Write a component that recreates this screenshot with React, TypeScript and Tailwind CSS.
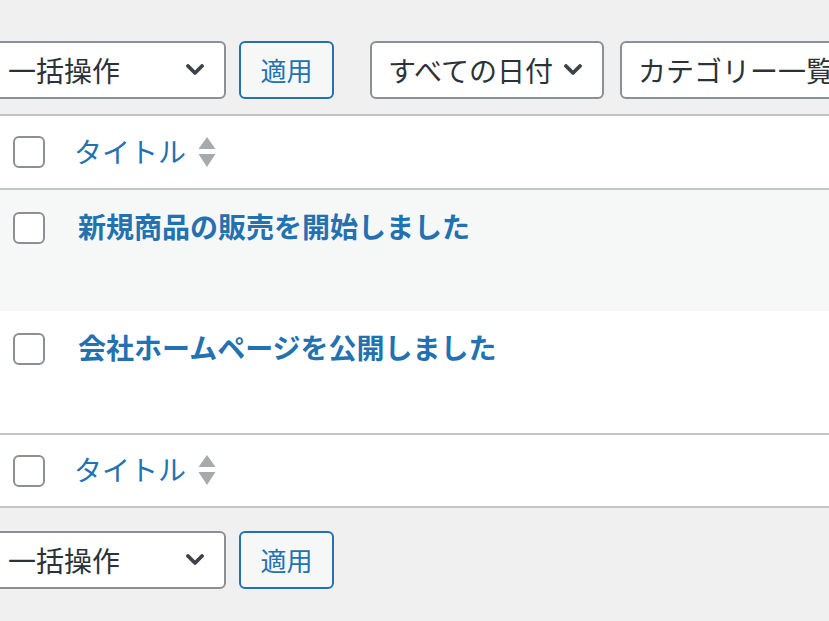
import React from "react";

const font = "font-['Noto_Sans_CJK_JP','Noto_Sans',sans-serif]";

const Chevron: React.FC = () => (
  <svg width="18" height="12" viewBox="0 0 18 12" className="shrink-0">
    <polyline
      points="2,2 9,9 16,2"
      fill="none"
      stroke="#3c434a"
      strokeWidth="3.8"
      strokeLinecap="round"
      strokeLinejoin="round"
    />
  </svg>
);

const SortArrows: React.FC = () => (
  <svg width="18" height="31" viewBox="0 0 18 31" className="shrink-0">
    <polygon points="9,0 17.5,12 0.5,12" fill="#a7aaad" />
    <polygon points="0.5,17 17.5,17 9,30" fill="#a7aaad" />
  </svg>
);

const Checkbox: React.FC = () => (
  <div className="w-[32px] h-[32px] shrink-0 rounded-[6px] border-2 border-[#8c8f94] bg-white" />
);

interface SelectBoxProps {
  label: string;
  className: string;
  chevron?: boolean;
}

const SelectBox: React.FC<SelectBoxProps> = ({ label, className, chevron = true }) => (
  <div
    className={`h-[58px] shrink-0 flex items-center justify-between pl-[16px] pr-[20px] rounded-[6px] border-2 border-[#8c8f94] bg-white text-[28px] text-[#2c3338] whitespace-nowrap overflow-hidden ${className}`}
  >
    <span className="leading-[32px]">{label}</span>
    {chevron && <Chevron />}
  </div>
);

const ApplyButton: React.FC = () => (
  <div className="h-[58px] w-[95px] shrink-0 flex items-center justify-center rounded-[6px] border-2 border-[#2271b1] bg-[#f6f7f7] text-[26px] text-[#2271b1]">
    <span className="leading-[32px]">適用</span>
  </div>
);

// header / footer of the list table
const HeaderRow: React.FC<{ className: string }> = ({ className }) => (
  <div className={`box-content flex items-center bg-white ${className}`}>
    <div className="pl-[13px] pr-[29px]">
      <Checkbox />
    </div>
    <div className="flex items-center gap-[12px]">
      <span className="text-[28px] leading-[32px] text-[#2271b1] -mt-[3px]">タイトル</span>
      <SortArrows />
    </div>
  </div>
);

const PostRow: React.FC<{ title: string; className: string }> = ({ title, className }) => (
  <div className={`flex items-start pt-[22px] ${className}`}>
    <div className="pl-[13px] pr-[33px]">
      <Checkbox />
    </div>
    <span className="text-[28px] leading-[32px] font-bold text-[#2271b1] -mt-[2px] whitespace-nowrap">
      {title}
    </span>
  </div>
);

export default function App() {
  return (
    <div className={`w-[829px] h-[621px] overflow-hidden bg-[#f0f0f1] pt-[41px] ${font}`}>
      <div className="flex items-center -ml-[10px]">
        <SelectBox label="一括操作" className="w-[236px]" />
        <div className="w-[13px] shrink-0" />
        <ApplyButton />
        <div className="w-[36px] shrink-0" />
        <SelectBox label="すべての日付" className="w-[234px]" />
        <div className="w-[16px] shrink-0" />
        <SelectBox label="カテゴリー一覧" className="w-[280px]" chevron={false} />
      </div>

      <div className="mt-[15px] border-y-2 border-[#c3c4c7] bg-white">
        <HeaderRow className="h-[72px] border-b-2 border-[#c3c4c7]" />
        <PostRow title="新規商品の販売を開始しました" className="h-[121px] bg-[#f6f7f7]" />
        <PostRow title="会社ホームページを公開しました" className="h-[122px] bg-white" />
        <HeaderRow className="h-[71px] border-t-2 border-[#c3c4c7]" />
      </div>

      <div className="mt-[23px] flex items-center -ml-[10px]">
        <SelectBox label="一括操作" className="w-[236px]" />
        <div className="w-[13px] shrink-0" />
        <ApplyButton />
      </div>
    </div>
  );
}
